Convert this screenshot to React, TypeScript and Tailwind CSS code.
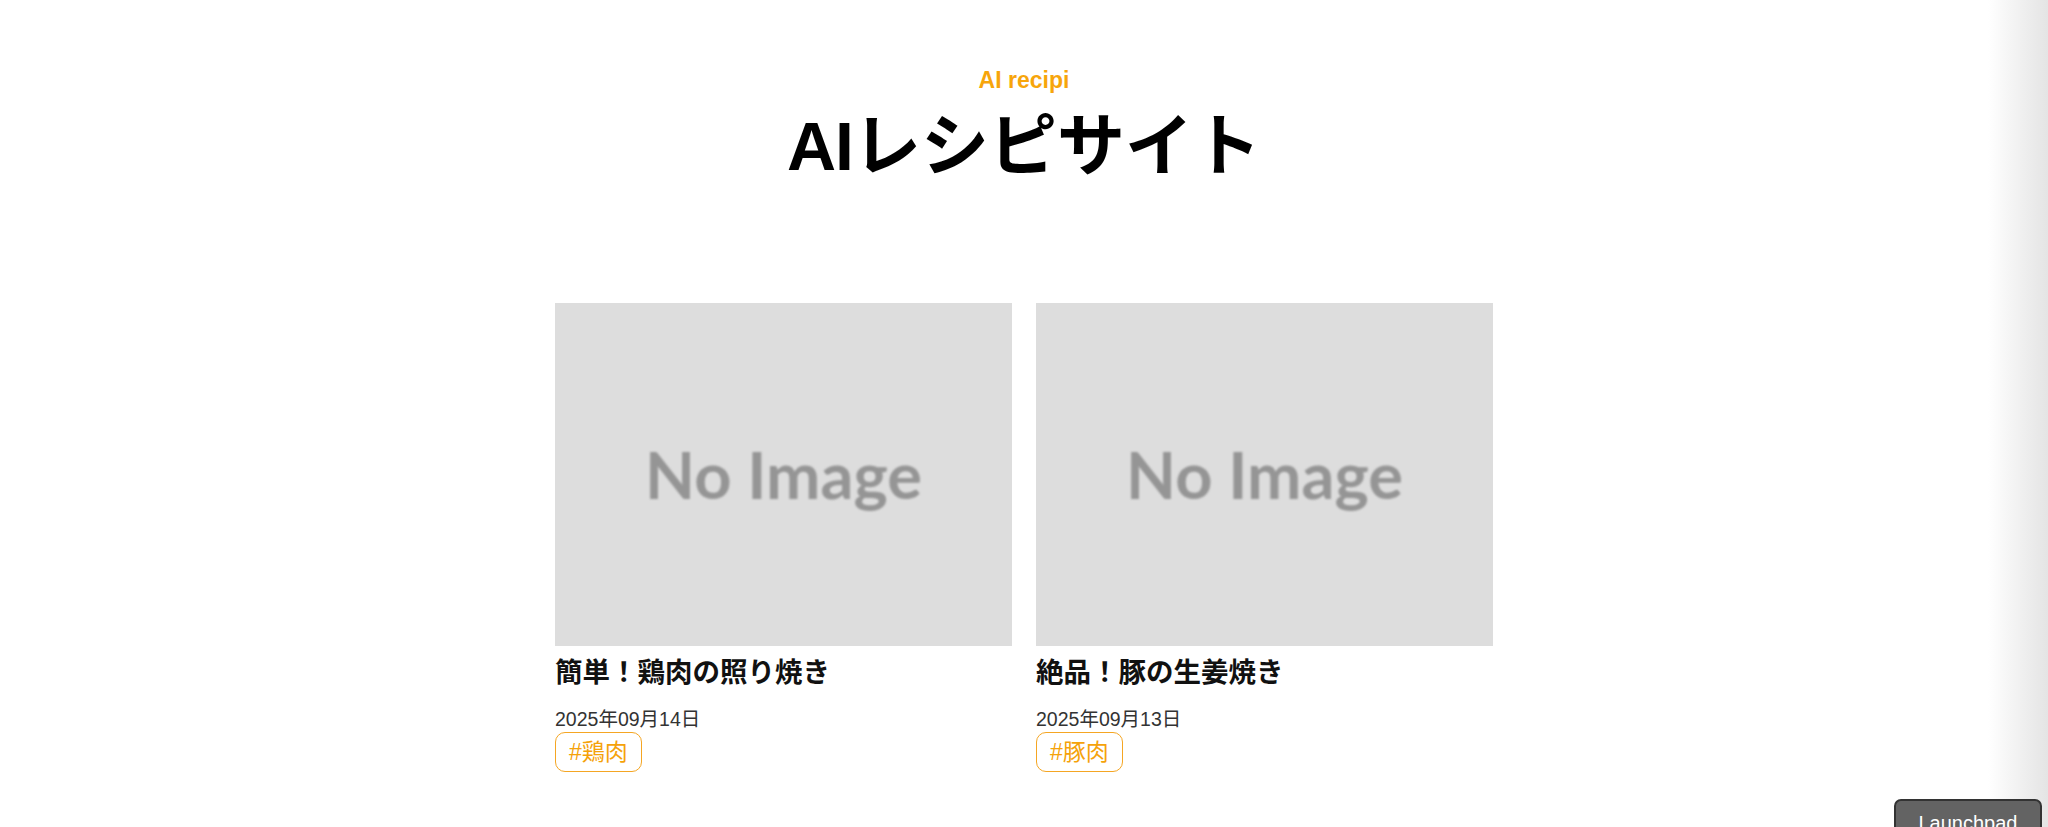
const JP = "font-['Liberation_Sans','Noto_Sans_CJK_JP',sans-serif]";

type Recipe = { title: string; date: string; tag: string };

const recipes: Recipe[] = [
  { title: '簡単！鶏肉の照り焼き', date: '2025年09月14日', tag: '#鶏肉' },
  { title: '絶品！豚の生姜焼き', date: '2025年09月13日', tag: '#豚肉' },
];

function NoImage() {
  return (
    <div className="flex h-[343px] w-[457px] items-center justify-center bg-[#dddddd]">
      <span className="font-['Lato',sans-serif] text-[65px] font-bold leading-none text-[#959595] blur-[0.8px]">
        No Image
      </span>
    </div>
  );
}

function RecipeCard({ recipe }: { recipe: Recipe }) {
  return (
    <div className="flex w-[457px] flex-col items-start">
      <NoImage />
      <h2 className="mt-[9px] text-[27.5px] font-bold leading-[36px] text-[#111]">{recipe.title}</h2>
      <p className="mt-[15px] text-[19.5px] leading-[26px] text-[#333]">{recipe.date}</p>
      <span className="rounded-[10px] border-[1.5px] border-[#f5a623] px-[13px] py-[4px] text-[23px] leading-[30px] text-[#f5a20a]">
        {recipe.tag}
      </span>
    </div>
  );
}

export default function App() {
  return (
    <div className={`relative min-h-[827px] overflow-hidden bg-white ${JP}`}>
      <header className="flex flex-col items-center pt-[64px]">
        <p className="text-[23px] font-bold leading-[32px] text-[#f7a50b]">AI recipi</p>
        <h1 className="mt-[10px] text-[68px] font-bold leading-[80px] text-black">
          <span className="tracking-[-1px]">AI</span>レシピサイト
        </h1>
      </header>

      <main className="mx-auto mt-[117px] flex w-[938px] gap-[24px]">
        {recipes.map((r) => (
          <RecipeCard key={r.title} recipe={r} />
        ))}
      </main>

      {/* right edge shade */}
      <div className="pointer-events-none absolute right-0 top-0 h-full w-[60px] bg-linear-to-r from-white/0 to-[#e4e4e4]" />

      <button className="absolute left-[1894px] top-[799px] h-[44px] w-[148px] rounded-[7px] border-2 border-[#333] bg-[#636363] pt-[4px] text-center font-['Liberation_Sans',sans-serif] text-[20px] leading-[24px] text-white">
        <span className="block">Launchpad</span>
      </button>
    </div>
  );
}
